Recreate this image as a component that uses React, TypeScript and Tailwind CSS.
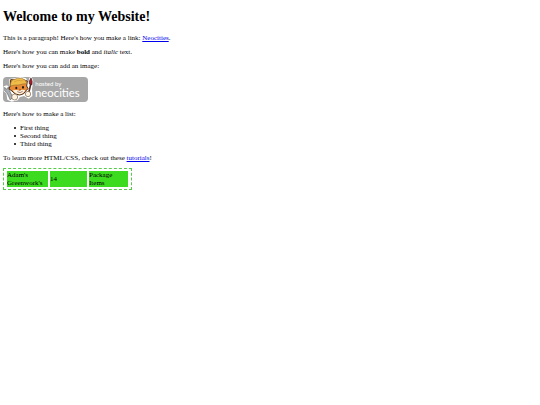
function NeocitiesBadge() {
  return (
    <svg viewBox="0 0 255 75" className="h-[25px] w-[85px]" role="img" aria-label="Hosted by Neocities">
      <rect width="255" height="75" rx="11" fill="#a7a7a7" />
      {/* white edge behind the cat */}
      <path
        d="M2 28 L12 25 L20 32 L19 6 L34 4 L52 0 L69 4 L76 18 L79 2 L86 0 L91 12 L87 36 L88 57 L77 65 L63 57 L50 61 L44 70 L26 74 L13 68 L10 49 L2 43Z"
        fill="#fff"
      />
      {/* wrench */}
      <path d="M5 31 L11 37 L16 30 L19 40 L29 60 L22 69 L12 47 L5 41Z" fill="#a9afb5" stroke="#666" strokeWidth="2" />
      {/* paint brush */}
      <path d="M83 23 L77 48" stroke="#5b2c22" strokeWidth="5" strokeLinecap="round" />
      <path d="M79 21 Q78 10 84 3 Q90 14 87 23Z" fill="#a51f2c" stroke="#431619" strokeWidth="2" />
      {/* head */}
      <path
        d="M23 8 L22 26 L18 36 L27 42 Q35 54 50 54 Q65 52 68 42 L75 35 L71 27 L73 12 L60 8Z"
        fill="#e98b35"
        stroke="#4a3020"
        strokeWidth="3"
        strokeLinejoin="round"
      />
      <path d="M29 40 Q37 52 50 52 Q61 51 67 40 L57 38 L50 41 L41 39Z" fill="#fff5e4" />
      {/* hat */}
      <path
        d="M22 24 Q24 7 35 7 Q43 2 56 4 Q69 7 72 20 Q58 20 48 24 Q34 23 23 27Z"
        fill="#f0bd48"
        stroke="#9b7030"
        strokeWidth="2"
      />
      <path d="M33 15 L45 10 L61 12" fill="none" stroke="#d1973a" strokeWidth="2" />
      <ellipse cx="40" cy="33" rx="3" ry="4" fill="#211a18" />
      <ellipse cx="60" cy="31" rx="3" ry="4" fill="#211a18" />
      <path d="M48 38 L54 37 L51 41Z" fill="#7c3328" />
      <path d="M43 44 Q52 50 59 43" fill="none" stroke="#713527" strokeWidth="2" />
      {/* paws */}
      <circle cx="35" cy="60" r="9" fill="#fff3df" stroke="#76604e" strokeWidth="2" />
      <circle cx="75" cy="51" r="8" fill="#fff3df" stroke="#76604e" strokeWidth="2" />
      <g fill="#fff" fontFamily="Lato, sans-serif">
        <text x="97" y="27" fontSize="18">hosted by</text>
        <text x="96" y="59" fontSize="34">neocities</text>
      </g>
    </svg>
  );
}

const things = ['First thing', 'Second thing', 'Third thing'];

export default function App() {
  return (
    <main className="px-[3px] pt-[9px] font-['Liberation_Serif',serif] text-[7px] leading-[8px] text-black">
      <h1 className="text-[14px] leading-[16px] font-bold">Welcome to my Website!</h1>

      <div className="mt-[9px] flex flex-col items-start gap-[6px]">
        <p>
          This is a paragraph! Here's how you make a link:{' '}
          <a href="#neocities" className="text-[#0000ee] underline">Neocities</a>.
        </p>
        <p>
          Here's how you can make <strong className="font-bold">bold</strong> and <em>italic</em> text.
        </p>
        <p>Here's how you can add an image:</p>
        <a href="#home" className="mt-px mb-[2px]">
          <NeocitiesBadge />
        </a>
        <p>Here's how to make a list:</p>
        <ul className="pl-[11px]">
          {things.map((thing) => (
            <li key={thing} className="flex items-center gap-1 before:size-[2px] before:rounded-full before:bg-black">
              {thing}
            </li>
          ))}
        </ul>
        <p>
          To learn more HTML/CSS, check out these{' '}
          <a href="#tutorials" className="text-[#0000ee] underline">tutorials</a>!
        </p>
        <table className="border-separate border-spacing-[2px] border border-dashed border-[#55cc48] px-px text-left">
          <tbody>
            <tr className="*:bg-[#3ddb20] *:p-0">
              <td className="w-[41px]">Adam's<br />Greenwork's</td>
              <td className="w-[37px]">14</td>
              <td className="w-[39px]">Package<br />Items</td>
            </tr>
          </tbody>
        </table>
      </div>
    </main>
  );
}
